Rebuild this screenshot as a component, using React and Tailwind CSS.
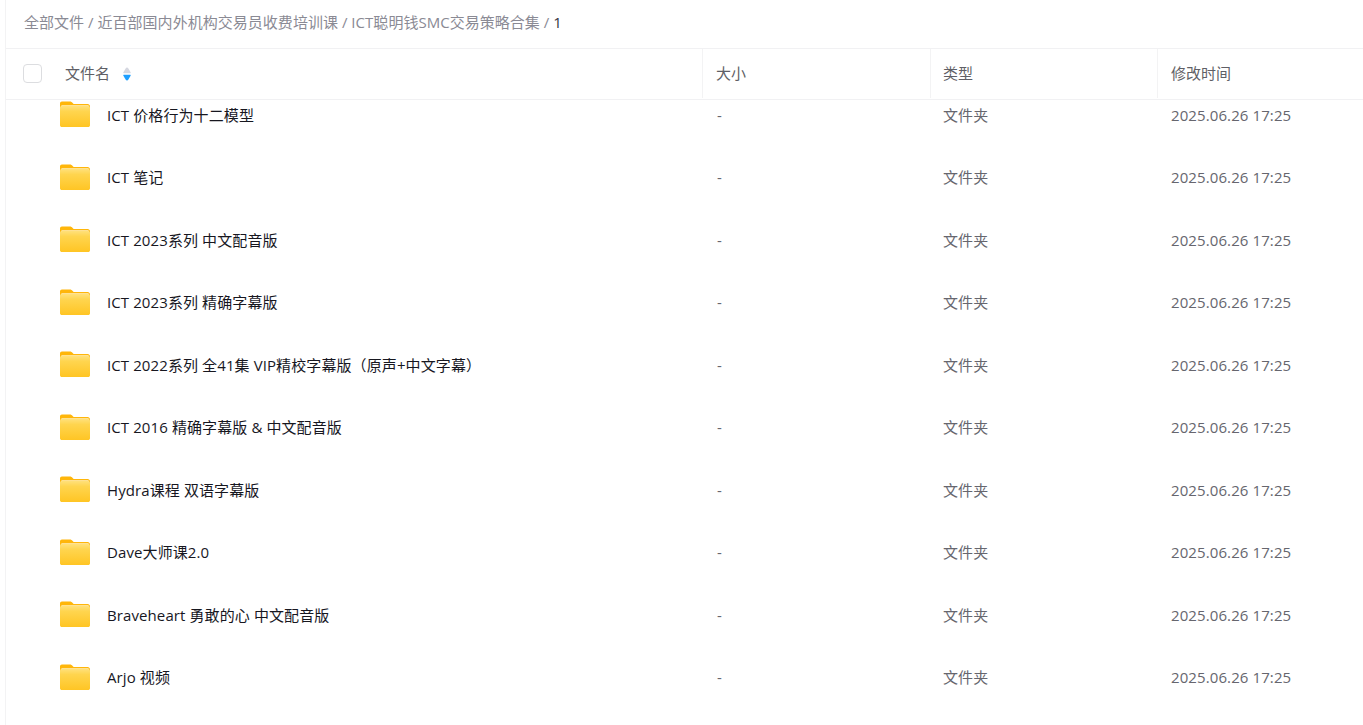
import React from 'react';

const rows = [
  'ICT 价格行为十二模型',
  'ICT 笔记',
  'ICT 2023系列 中文配音版',
  'ICT 2023系列 精确字幕版',
  'ICT 2022系列 全41集 VIP精校字幕版（原声+中文字幕）',
  'ICT 2016 精确字幕版 & 中文配音版',
  'Hydra课程 双语字幕版',
  'Dave大师课2.0',
  'Braveheart 勇敢的心 中文配音版',
  'Arjo 视频',
];

function FolderIcon() {
  return (
    <svg width="30" height="26" viewBox="0 0 32 28" preserveAspectRatio="none" className="mb-[2px] shrink-0">
      <defs>
        <linearGradient id="folderFront" x1="0" y1="0" x2="0" y2="1">
          <stop offset="0" stopColor="#ffe07a" />
          <stop offset="0.25" stopColor="#ffd54f" />
          <stop offset="1" stopColor="#ffc524" />
        </linearGradient>
      </defs>
      <path d="M2 0.5h8.5c1.4 0 2 .6 3 1.6l1 1h15c1.4 0 2.5 1.1 2.5 2.5v6H0V2.5C0 1.4.9.5 2 .5z" fill="#ffb60a" />
      <rect x="1" y="4.5" width="30" height="8" rx="1.5" fill="#fff0c0" />
      <path d="M0 7.5c0-1.1.9-2 2-2h28c1.1 0 2 .9 2 2V26c0 1.1-.9 2-2 2H2c-1.1 0-2-.9-2-2z" fill="url(#folderFront)" />
    </svg>
  );
}

function SortIcon() {
  return (
    <svg width="8" height="14" viewBox="0 0 8 14" className="ml-[13px]">
      <path d="M4 0.5c.6 0 1 .4 1.4 1L7.6 5.2c.3.6 0 1-.6 1H1c-.6 0-.9-.4-.6-1l2.2-3.7c.4-.6.8-1 1.4-1z" fill="#d5d7e0" />
      <path d="M4 13.5c.6 0 1-.4 1.4-1l2.2-3.7c.3-.6 0-1-.6-1H1c-.6 0-.9.4-.6 1l2.2 3.7c.4.6.8 1 1.4 1z" fill="#1e9fff" />
    </svg>
  );
}

export default function App() {
  return (
    <div
      className="h-[725px] w-[1363px] overflow-hidden bg-white pl-[5px] text-[15px]"
      style={{ fontFamily: '"Open Sans", "Noto Sans CJK SC", sans-serif' }}
    >
      <div className="flex h-full flex-col border-l border-[#f3f3f4]">
        {/* Breadcrumb */}
        <div className="flex h-[48px] shrink-0 items-center pb-[3px] pl-[18px] tracking-[0.03px] text-[#8a8a94]">
          全部文件 / 近百部国内外机构交易员收费培训课 / ICT聪明钱SMC交易策略合集 /&nbsp;<span className="text-[#35353f]">1</span>
        </div>

        {/* Header */}
        <div className="flex h-[52px] shrink-0 items-center border-y border-[#f1f1f3] pb-[1px] text-[#5f5f66]">
          <div className="flex w-[696px] items-center pl-[17px]">
            <div className="h-[19px] w-[19px] rounded-[4px] border border-[#dcdde0]" />
            <span className="ml-[23px]">文件名</span>
            <SortIcon />
          </div>
          <div className="flex h-full w-[228px] items-center border-l border-[#f3f3f4] pl-[13px]">大小</div>
          <div className="flex h-full w-[227px] items-center border-l border-[#f3f3f4] pl-[12px]">类型</div>
          <div className="flex h-full flex-1 items-center border-l border-[#f3f3f4] pl-[13px]">修改时间</div>
        </div>

        {/* Rows */}
        <div className="min-h-0 flex-1 overflow-hidden">
          <div className="-mt-[16.25px] tracking-[0.1px]">
            {rows.map((name) => (
              <div key={name} className="flex h-[62.5px] items-center">
                <div className="flex w-[696px] items-center pl-[54px]">
                  <FolderIcon />
                  <span className="ml-[17px] text-[#17171f]">{name}</span>
                </div>
                <div className="w-[228px] pl-[15px] text-[#66666e]">-</div>
                <div className="w-[227px] pl-[13px] text-[#66666e]">文件夹</div>
                <div className="flex-1 pl-[14px] text-[#66666e]">2025.06.26 17:25</div>
              </div>
            ))}
          </div>
        </div>
      </div>
    </div>
  );
}
